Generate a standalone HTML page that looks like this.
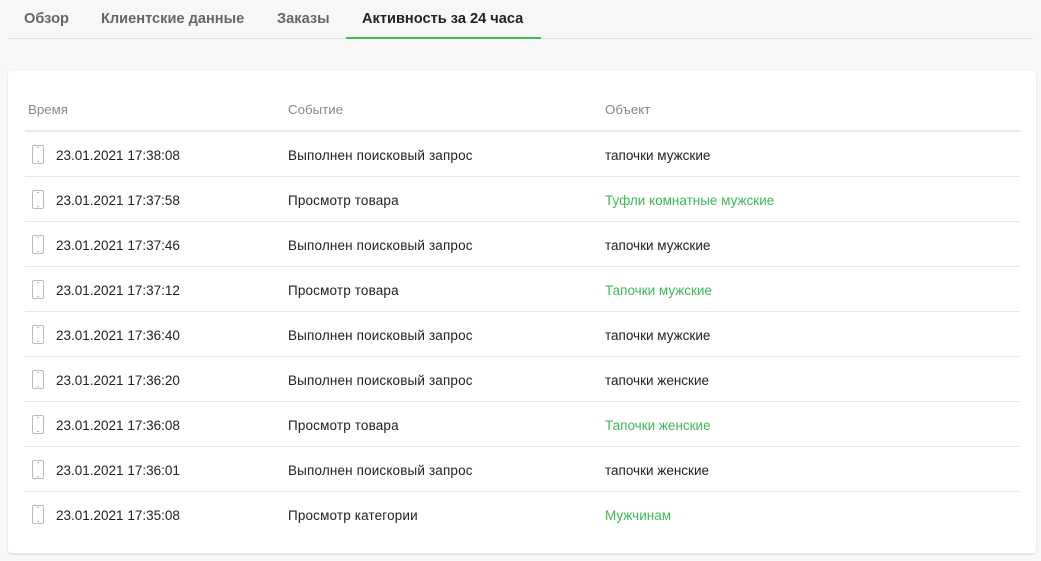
<!DOCTYPE html>
<html><head><meta charset="utf-8"><style>
*{margin:0;padding:0;box-sizing:border-box}
body{width:1041px;height:561px;background:#f7f7f7;font-family:"Liberation Sans",sans-serif;position:relative;overflow:hidden;color:#222}
.tabs{position:absolute;left:8px;top:0;width:1025px;height:39px;border-bottom:1px solid #e4e4e4}
.tab{position:absolute;top:11px;font-size:14.6px;color:#666;font-weight:bold;white-space:nowrap}
.tab.a{color:#222}
.ul{position:absolute;left:346px;top:37px;width:195px;height:2px;background:#3cba54}
.card{position:absolute;left:8px;top:71px;width:1028px;height:482px;background:#fff;border-radius:3px;box-shadow:0 1px 2px rgba(0,0,0,.15)}
.h{position:absolute;top:31px;font-size:13.3px;color:#888}
.hl{position:absolute;left:17px;top:59px;width:995px;height:2px;background:#e8eaec}
.row{position:absolute;left:17px;width:995px;height:45px;border-bottom:1px solid #e6e6e6;font-size:13.5px}
.row span{position:absolute;top:16px;white-space:nowrap}
.e{letter-spacing:.15px}
.g{color:#3cba54}
.ic{position:absolute;left:7px;top:13px;width:12px;height:19px;border:1.5px solid #bbb;border-radius:2px}
.ic:before{content:"";position:absolute;left:4px;top:1px;width:2px;height:1px;background:#bbb}
.ic:after{content:"";position:absolute;left:4px;bottom:1px;width:2px;height:1px;background:#bbb}
</style></head><body>
<div class="tabs">
<div class="tab" style="left:16px">Обзор</div>
<div class="tab" style="left:93px">Клиентские данные</div>
<div class="tab" style="left:269px">Заказы</div>
<div class="tab a" style="left:354px">Активность за 24 часа</div>
</div>
<div class="ul"></div>
<div class="card">
<div class="h" style="left:20px">Время</div>
<div class="h" style="left:280px">Событие</div>
<div class="h" style="left:597px">Объект</div>
<div class="hl"></div>
<div class="row" style="top:61px"><i class="ic"></i><span style="left:31px">23.01.2021 17:38:08</span><span class="e" style="left:263px">Выполнен поисковый запрос</span><span style="left:580px">тапочки мужские</span></div>
<div class="row" style="top:106px"><i class="ic"></i><span style="left:31px">23.01.2021 17:37:58</span><span class="e" style="left:263px">Просмотр товара</span><span class="g" style="left:580px">Туфли комнатные мужские</span></div>
<div class="row" style="top:151px"><i class="ic"></i><span style="left:31px">23.01.2021 17:37:46</span><span class="e" style="left:263px">Выполнен поисковый запрос</span><span style="left:580px">тапочки мужские</span></div>
<div class="row" style="top:196px"><i class="ic"></i><span style="left:31px">23.01.2021 17:37:12</span><span class="e" style="left:263px">Просмотр товара</span><span class="g" style="left:580px">Тапочки мужские</span></div>
<div class="row" style="top:241px"><i class="ic"></i><span style="left:31px">23.01.2021 17:36:40</span><span class="e" style="left:263px">Выполнен поисковый запрос</span><span style="left:580px">тапочки мужские</span></div>
<div class="row" style="top:286px"><i class="ic"></i><span style="left:31px">23.01.2021 17:36:20</span><span class="e" style="left:263px">Выполнен поисковый запрос</span><span style="left:580px">тапочки женские</span></div>
<div class="row" style="top:331px"><i class="ic"></i><span style="left:31px">23.01.2021 17:36:08</span><span class="e" style="left:263px">Просмотр товара</span><span class="g" style="left:580px">Тапочки женские</span></div>
<div class="row" style="top:376px"><i class="ic"></i><span style="left:31px">23.01.2021 17:36:01</span><span class="e" style="left:263px">Выполнен поисковый запрос</span><span style="left:580px">тапочки женские</span></div>
<div class="row" style="top:421px;border:none"><i class="ic"></i><span style="left:31px">23.01.2021 17:35:08</span><span class="e" style="left:263px">Просмотр категории</span><span class="g" style="left:580px">Мужчинам</span></div>
</div>
</body></html>
